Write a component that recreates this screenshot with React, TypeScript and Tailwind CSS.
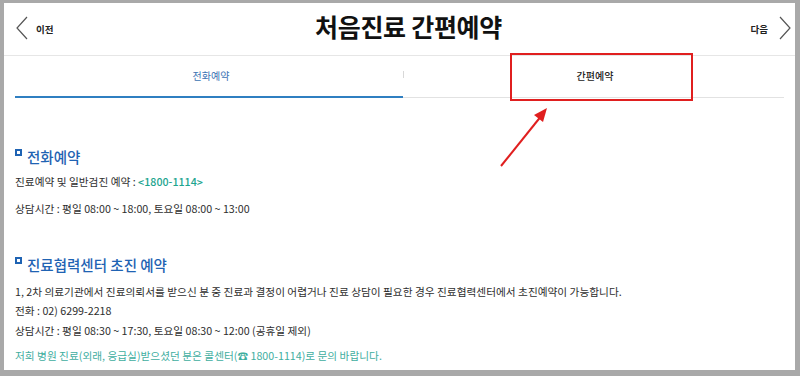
import React from "react";

const font = { fontFamily: '"Noto Sans CJK KR", "Noto Sans", sans-serif' };

function Heading({ children }: { children: React.ReactNode }) {
  return (
    <div className="flex items-start h-[20px]">
      <span className="mt-[2px] mr-[5px] w-[7px] h-[7px] border-2 border-[#1f63b3] shrink-0" />
      <span className="text-[14.5px] leading-[20px] text-[#1f63b3] font-medium">{children}</span>
    </div>
  );
}

export default function App() {
  return (
    <div className="w-[800px] h-[376px] bg-[#a9a9a9] pt-[3px] pl-[4px] pr-[5px] pb-[6px]" style={font}>
      <div className="relative h-full bg-white flex flex-col">
        {/* header */}
        <div className="h-[53px] grid grid-cols-[1fr_auto_1fr] items-center border-b border-[#e6e6e6] pl-[11px] pr-[3px]">
          <div className="flex items-center gap-[7px]">
            <svg width="14" height="24" viewBox="0 0 14 24" className="-mt-[2px]">
              <path d="M12 1 L2 12 L12 23" fill="none" stroke="#555" strokeWidth="1.2" />
            </svg>
            <span className="text-[9.5px] font-bold text-[#222]">이전</span>
          </div>
          <h1 className="text-[25px] font-bold text-[#111] ml-[10px] -mt-[4px] tracking-[-0.3px]">처음진료 간편예약</h1>
          <div className="flex items-center justify-end gap-[10px]">
            <span className="text-[9.5px] font-bold text-[#222]">다음</span>
            <svg width="14" height="24" viewBox="0 0 14 24" className="-mt-[2px]">
              <path d="M2 1 L12 12 L2 23" fill="none" stroke="#555" strokeWidth="1.2" />
            </svg>
          </div>
        </div>

        {/* tabs */}
        <div className="px-[11px]">
          <div className="flex h-[42px] border-b border-[#e2e2e2]">
            <div className="w-[388px] flex items-center justify-center border-b-2 border-[#2f7fc1] -mb-[1px] text-[10px] text-[#3b73b3]">
              <span className="-mt-[2px] ml-[4px]">전화예약</span>
            </div>
            <div className="flex items-center">
              <span className="w-px h-[7px] bg-[#d8d8d8] -mt-[4px]" />
            </div>
            <div className="flex-1 flex items-center justify-center text-[10px] font-medium text-[#222]">
              <span className="-mt-[2px] ml-[2px]">간편예약</span>
            </div>
          </div>
        </div>

        {/* content */}
        <div className="px-[11px] text-[10.7px] text-[#2e2e2e] leading-[18px]">
          <div className="mt-[49px]">
            <Heading>전화예약</Heading>
          </div>
          <p className="mt-[6px]">
            진료예약 및 일반검진 예약 : <span className="text-[#1ea58f] font-medium">&lt;1800-1114&gt;</span>
          </p>
          <p className="mt-[9px]">상담시간 : 평일 08:00 ~ 18:00, 토요일 08:00 ~ 13:00</p>

          <div className="mt-[37px]">
            <Heading>진료협력센터 초진 예약</Heading>
          </div>
          <p className="mt-[8px]">
            1, 2차 의료기관에서 진료의뢰서를 받으신 분 중 진료과 결정이 어렵거나 진료 상담이 필요한 경우 진료협력센터에서 초진예약이 가능합니다.
          </p>
          <p className="mt-[1px]">전화 : 02) 6299-2218</p>
          <p className="mt-[2px]">상담시간 : 평일 08:30 ~ 17:30, 토요일 08:30 ~ 12:00 (공휴일 제외)</p>
          <p className="mt-[7px] text-[#3fae9f]">
            저희 병원 진료(외래, 응급실)받으셨던 분은 콜센터(☎ 1800-1114)로 문의 바랍니다.
          </p>
        </div>

        {/* annotation */}
        <div className="absolute left-[506px] top-[50px] w-[183px] h-[48px] border-2 border-[#e01f1f]" />
        <svg className="absolute left-[490px] top-[100px]" width="60" height="70" viewBox="0 0 60 70">
          <path d="M7 63 L48 12" stroke="#e01f1f" strokeWidth="2" fill="none" />
          <path d="M53 5 L40 12 L49 19 Z" fill="#e01f1f" />
        </svg>
      </div>
    </div>
  );
}
